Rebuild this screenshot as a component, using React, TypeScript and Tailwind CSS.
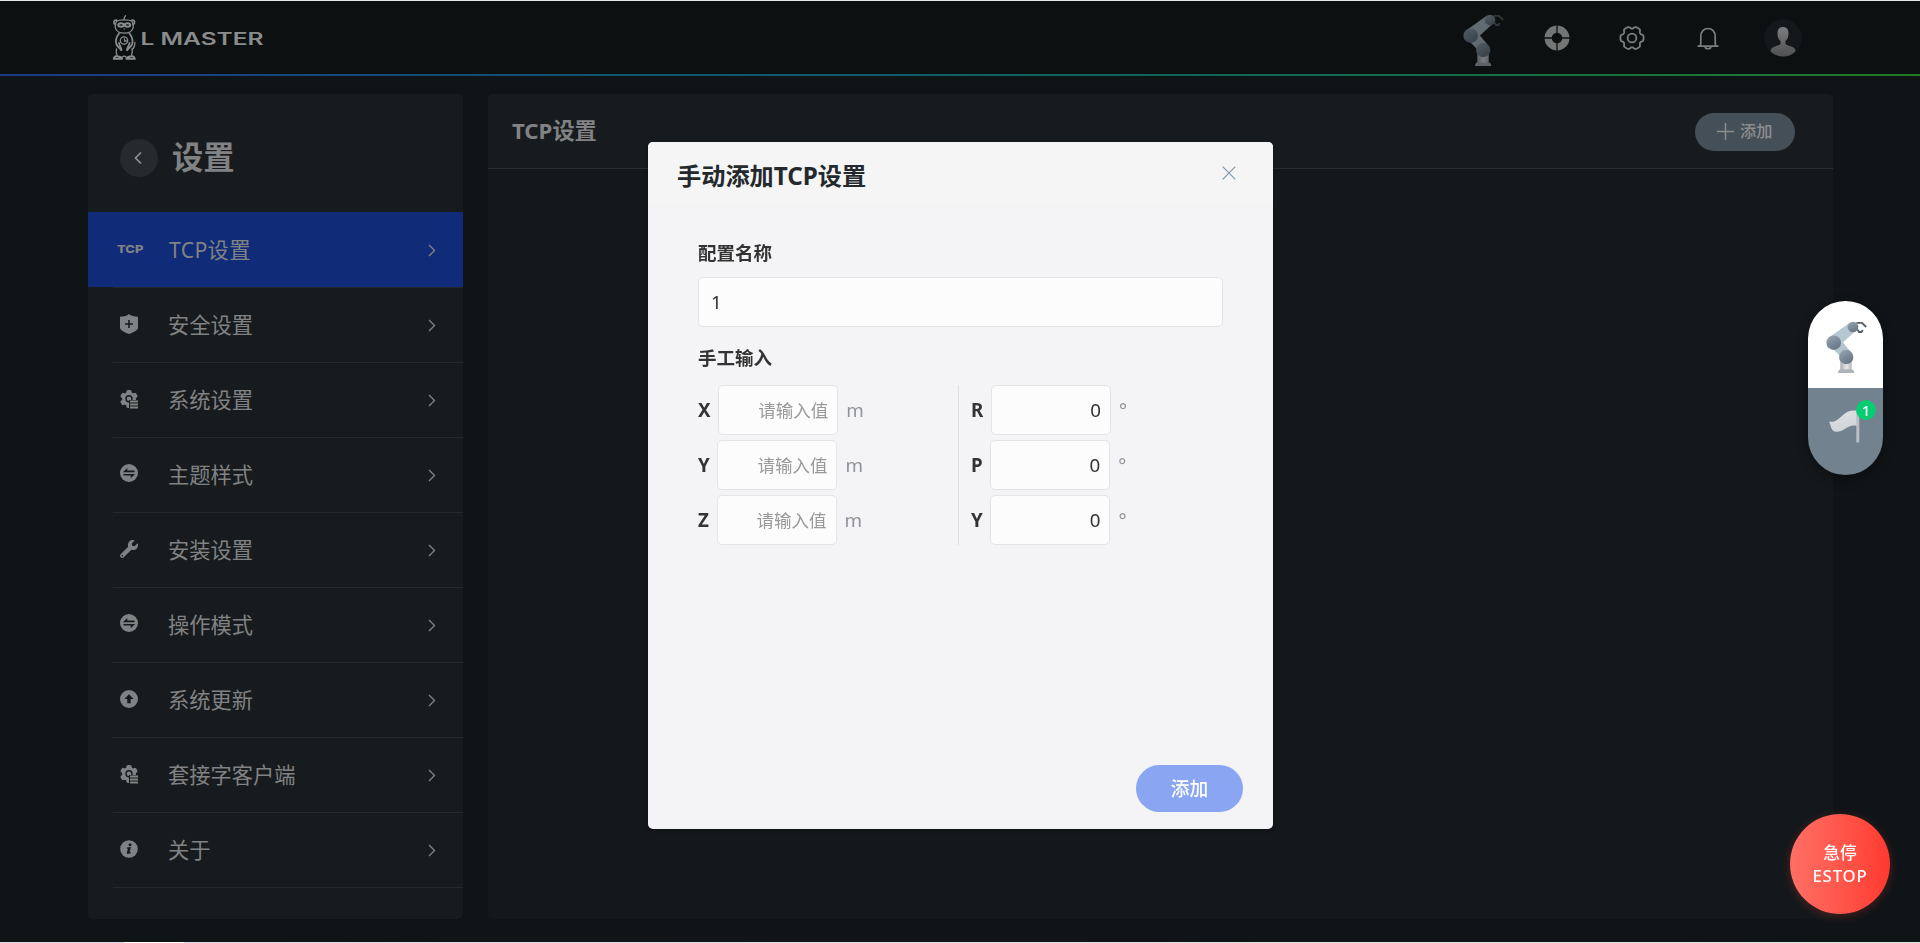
import React from "react";
import { FaWrench } from "react-icons/fa";

/** Closed wavy outline used for the gear icons. */
function gearPath(c: number, base: number, amp: number, phase: number): string {
  const pts: string[] = [];
  for (let i = 0; i < 120; i++) {
    const t = (i / 120) * Math.PI * 2;
    const wave = Math.tanh(2.2 * (Math.cos(6 * (t - phase)) + 0.45));
    const r = base + amp * wave;
    pts.push(`${(c + r * Math.cos(t)).toFixed(2)} ${(c + r * Math.sin(t)).toFixed(2)}`);
  }
  return `M${pts.join("L")}Z`;
}

function RobotArm({ id, className }: { id: string; className?: string }) {
  return (
    <svg width="42" height="52" viewBox="0 0 42 52" className={className}>
      <defs>
        <linearGradient id={`${id}-joint`} x1="0" y1="0" x2="0.6" y2="1">
          <stop offset="0" stopColor="#9ba8b5" />
          <stop offset="1" stopColor="#667686" />
        </linearGradient>
        <linearGradient id={`${id}-base`} x1="0" y1="0" x2="1" y2="0">
          <stop offset="0" stopColor="#a9adb4" />
          <stop offset="0.55" stopColor="#e4e6e9" />
          <stop offset="1" stopColor="#b4b8be" />
        </linearGradient>
      </defs>
      <path d="M14.3 36h11.4v13H14.3z" fill={`url(#${id}-base)`} />
      <path d="M14 48.5h12.2c.8 0 2 1.500 2 3.500H12c0-2 1.200-3.500 2-3.500z" fill="#aeb3ba" />
      <path d="M4.500 15.500 24 1.500l5.500 8.500L12 26z" fill="#b5c7d3" />
      <path d="M14 18l10 12-8 7L6 27z" fill="#b3c5d1" />
      <path
        d="M30.500 1.800h5.500l4.200 4.200M31.500 8.500l1.500 2.500h2.500l1.200-2"
        fill="none"
        stroke="#555c62"
        strokeWidth="1.800"
      />
      <circle cx="27" cy="6" r="5.300" fill={`url(#${id}-joint)`} />
      <circle cx="7.700" cy="21.700" r="7.300" fill={`url(#${id}-joint)`} />
      <circle cx="20.200" cy="36" r="7.200" fill={`url(#${id}-joint)`} />
    </svg>
  );
}

function Logo() {
  return (
    <div className="flex h-[48px] w-[160px]">
      <svg width="160" height="48" viewBox="0 0 160 48">
        <g transform="translate(0 1)" fill="none" stroke="#8b8d8d" strokeWidth="1.300" strokeLinecap="round">
          <path d="M12 4.500c0-2 .7-3 1.500-3.800" />
          <path d="M4.500 6.500C7 4.400 17.500 4.400 20 6.500c2.500 3.800 1.500 8.500-2 10.500-3 1.500-8.300 1.500-11.500 0C3 15 2 10.300 4.500 6.500z" />
          <path d="M3.500 9.500C1 8 1.500 5 4.500 5.200M21 9.500c2.500-1.500 2-4.500-1-4.300" strokeWidth="1.700" />
          <ellipse cx="9" cy="10" rx="2.700" ry="1.700" strokeWidth="2" />
          <ellipse cx="15.500" cy="10" rx="2.700" ry="1.700" strokeWidth="2" />
          <circle cx="12" cy="25.500" r="3.700" />
          <path d="M12.500 24v2h2" />
          <path d="M7 18.500c-3 4-4 7.500-2.500 11 1.300 2.500 3 3.500 4.500 5.500M17.500 18.500c3 4 4 7.500 2.500 11-1.300 2.500-3 3.500-4.500 5.500" strokeWidth="1.800" />
          <path d="M7 28c.3 2.500 2 4 2.500 7M17.500 28c-.3 2.500-2 4-2.500 7" strokeWidth="1.800" />
          <path d="M4.500 34c-.5 2 0 5 .5 6.500M20 34c.5 2 0 5-.5 6.500M10.500 42c1-1.200 2.500-1.200 3.500 0M20.500 34.500c1.700-2 2.500-4 2.500-7" />
          <path d="M1.800 43.800c.2-2.300 2.500-3.300 4.700-2.300 2 .5 3.500 1 3.500 2.300zM14.500 43.800c0-1.300 1.500-1.800 3.500-2.300 2.200-1 4.500 0 4.700 2.300z" strokeWidth="1.900" />
        </g>
        <path d="M11 14.500h2.500l-1.200 1.300z" fill="#8b8d8d" />
        <text
          x="28.500"
          y="30.500"
          fill="#8b8d8d"
          fontFamily="Inter, sans-serif"
          fontWeight="600"
          fontSize="16.800"
          textLength="123"
          lengthAdjust="spacingAndGlyphs"
        >
          L MASTER
        </text>
      </svg>
    </div>
  );
}

function RingIcon() {
  return (
    <svg width="26" height="26" viewBox="0 0 26 26">
      <circle cx="13" cy="13" r="8.900" fill="none" stroke="#747676" strokeWidth="7.200" />
      <path d="M13 0v26M0 13h26" stroke="#0c1011" strokeWidth="1.300" />
    </svg>
  );
}

function SettingsIcon() {
  return (
    <svg width="26" height="26" viewBox="0 0 26 26" fill="none" stroke="#7c7e7e" strokeWidth="1.800">
      <path d={gearPath(13, 10.400, 1.200, 0)} strokeLinejoin="round" />
      <circle cx="13" cy="13" r="4.400" />
    </svg>
  );
}

function BellIcon() {
  return (
    <svg width="24" height="24" viewBox="0 0 24 24" fill="none" stroke="#7c7e7e" strokeWidth="1.700">
      <path d="M1.500 20.200h21M4 20c.6-1 .8-1.500.8-3v-6.500c0-5 3.200-8 7.200-8s7.200 3 7.200 8V17c0 1.500.2 2 .8 3" />
      <path d="M9 20.500c.5 3 5.500 3 6 0" />
    </svg>
  );
}

function Avatar() {
  return (
    <svg width="38" height="38" viewBox="0 0 38 38">
      <defs>
        <linearGradient id="avatar-fill" x1="0" y1="0" x2="0" y2="1">
          <stop offset="0" stopColor="#7c7d7e" />
          <stop offset="1" stopColor="#4e4f50" />
        </linearGradient>
      </defs>
      <circle cx="19" cy="19" r="18.700" fill="#15181b" />
      <path
        d="M19 8c3.600 0 5.500 2.300 5.500 6 0 4-1 6.500-3 8v3c1.500 1.700 6 2 8.500 4 .9.800 1.500 2 1.500 3.200C28.500 35.500 24 37.500 19 37.500S9.500 35.500 6.500 32.200c0-1.200.6-2.400 1.500-3.200 2.500-2 7-2.300 8.500-4v-3c-2-1.500-3-4-3-8 0-3.700 1.900-6 5.500-6z"
        fill="url(#avatar-fill)"
      />
    </svg>
  );
}

const ICON = "#818283";
const PANEL = "#171b1d";

function ShieldIcon() {
  return (
    <svg width="18" height="20" viewBox="0 0 18 20" className="mb-[2px]">
      <path d="M9 0c2 1.900 5 2.700 9 2.700V14c0 2-5 4.500-9 6-4-1.500-9-4-9-6V2.700C4 2.700 7 1.900 9 0z" fill={ICON} />
      <path d="M9 6v8M5 10h8" stroke={PANEL} strokeWidth="1.600" />
    </svg>
  );
}

function GearListIcon() {
  return (
    <svg width="18" height="19" viewBox="0 0 18 19" className="mb-px">
      <path d={gearPath(9, 7.800, 1.200, Math.PI / 6)} fill={ICON} />
      <circle cx="9" cy="8.700" r="3" fill="none" stroke={PANEL} strokeWidth="1.400" />
      <path d="M9 10h10v9H9z" fill={PANEL} />
      <path d="M10 11.500h8M10 14.500h8M10 17.500h8" stroke={ICON} strokeWidth="1.900" />
    </svg>
  );
}

function SwapIcon() {
  return (
    <svg width="18" height="18" viewBox="0 0 18 18" className="mb-[4px]">
      <circle cx="9" cy="9" r="9" fill={ICON} />
      <path d="M2.800 8.300 7.300 4v2.600h7.200v1.700zM15.200 9.900 10.700 14.200v-2.600H3.500V9.900z" fill={PANEL} />
    </svg>
  );
}

function UpIcon() {
  return (
    <svg width="18" height="18" viewBox="0 0 18 18" className="mb-[2px]">
      <circle cx="9" cy="9" r="9" fill={ICON} />
      <path d="M9 4.200 13.600 9H10.700v4.200H7.300V9H4.400z" fill={PANEL} />
    </svg>
  );
}

function InfoIcon() {
  return (
    <svg width="18" height="18" viewBox="0 0 18 18" className="mb-[2px]">
      <circle cx="9" cy="9" r="8.800" fill={ICON} />
      <circle cx="10" cy="4.700" r="1.500" fill={PANEL} />
      <path d="M6.800 7.600 10.900 7 9.600 12.400 11 12 10.600 13.200 7.400 14 6.700 13.300 7.900 8.700 6.700 8.600z" fill={PANEL} />
    </svg>
  );
}

function TcpIcon() {
  return (
    <svg width="28" height="12" viewBox="0 0 28 12" className="mb-[2px] ml-[2px]">
      <text
        x="1"
        y="10"
        fill={ICON}
        fontFamily="Inter, sans-serif"
        fontWeight="800"
        fontSize="11"
        textLength="26.500"
        lengthAdjust="spacingAndGlyphs"
      >
        TCP
      </text>
    </svg>
  );
}

const ITEMS: { label: string; icon: React.ReactNode }[] = [
  { label: "TCP设置", icon: <TcpIcon /> },
  { label: "安全设置", icon: <ShieldIcon /> },
  { label: "系统设置", icon: <GearListIcon /> },
  { label: "主题样式", icon: <SwapIcon /> },
  { label: "安装设置", icon: <FaWrench size={18} color={ICON} className="mb-[2px]" /> },
  { label: "操作模式", icon: <SwapIcon /> },
  { label: "系统更新", icon: <UpIcon /> },
  { label: "套接字客户端", icon: <GearListIcon /> },
  { label: "关于", icon: <InfoIcon /> },
];

function Sidebar() {
  return (
    <aside className="flex h-[825px] w-[375px] flex-col rounded-[5px] bg-[#171b1d]">
      <div className="flex h-[118px] shrink-0 items-center pt-[10px] pl-8">
        <button className="flex size-[38px] items-center justify-center rounded-full bg-[#26292d]">
          <svg width="8" height="14" viewBox="0 0 8 14" className="mr-[3px]" fill="none" stroke="#909192" strokeWidth="1.700">
            <path d="M7 1.500 1.500 7 7 12.500" />
          </svg>
        </button>
        <h1 className="ml-[14px] text-[31.25px] leading-none font-bold text-[#818283]">设置</h1>
      </div>
      {ITEMS.map((item, i) => (
        <div
          key={item.label}
          className={
            i === 0 ? "h-[75px] shrink-0 bg-[#102c78] pl-[25px]" : "h-[75px] shrink-0 pl-[25px]"
          }
        >
          <div
            className={
              i === 0
                ? "flex h-full items-center"
                : "flex h-full items-center border-t border-[#26292b]"
            }
          >
            <span className="flex w-8 items-center justify-center">{item.icon}</span>
            <span
              className={
                i === 0
                  ? "ml-[24px] flex-1 text-[21.25px] leading-none tracking-[0.3px] text-[#818283]"
                  : "mb-px ml-[23px] flex-1 text-[21.25px] leading-none text-[#818283]"
              }
            >
              {item.label}
            </span>
            <svg width="8" height="13" viewBox="0 0 8 13" className="mt-px mr-[27px]" fill="none" stroke="#818283" strokeWidth="1.400">
              <path d="M1 1l5.500 5.500L1 12" />
            </svg>
          </div>
        </div>
      ))}
      <div className="ml-[25px] h-px bg-[#26292b]" />
    </aside>
  );
}

function ValueRow({ label, value, unit }: { label: string; value?: string; unit: string }) {
  return (
    <div className="flex h-[50px] items-center">
      <label className="text-[18.75px] leading-none font-bold tracking-[-0.3px] text-[#333]">{label}</label>
      <input
        className="ml-[8px] h-[50px] w-[120px] rounded-[5px] border border-[#e4e4e6] bg-[#fcfcfc] pr-[9px] pb-[2px] text-right text-[18.75px] text-[#333] placeholder:text-[17.5px] placeholder:text-[#999]"
        defaultValue={value}
        placeholder="请输入值"
      />
      <span className="ml-[8px] text-[18.75px] leading-none text-[#909399]">{unit}</span>
    </div>
  );
}

function Dialog() {
  return (
    <div className="fixed inset-0 flex items-start justify-center pt-[142px] pl-px">
      <div className="flex h-[687px] w-[625px] flex-col rounded-[5px] bg-[#f4f4f6] shadow-[0_1px_4px_rgba(0,0,0,0.3)]">
        <div className="flex h-[63px] shrink-0 items-center justify-between rounded-t-[5px] bg-[#f5f5f5] pt-[5px] pr-[37px] pl-[29px]">
          <h2 className="text-[24.2px] leading-none font-bold text-[#23292c]">手动添加TCP设置</h2>
          <svg width="14" height="14" viewBox="0 0 14 14" className="mb-[6px]" stroke="#7f99aa" strokeWidth="1.200">
            <path d="M.7.700l12.600 12.600M13.300.700.700 13.300" />
          </svg>
        </div>
        <div className="flex flex-1 flex-col px-[50px] pt-[38px]">
          <h3 className="text-[18.5px] leading-[20px] font-bold text-[#333]">配置名称</h3>
          <input
            className="mt-[14px] h-[50px] shrink-0 rounded-[5px] border border-[#e4e4e6] bg-[#fcfcfc] px-[12px] pb-[2px] text-[18.75px] text-[#333]"
            defaultValue="1"
          />
          <h3 className="mt-[21px] text-[18.5px] leading-[20px] font-bold text-[#333]">手工输入</h3>
          <div className="mt-[17px] flex h-[160px]">
            <div className="flex w-[260px] flex-col gap-[5px]">
              <ValueRow label="X" unit="m" />
              <ValueRow label="Y" unit="m" />
              <ValueRow label="Z" unit="m" />
            </div>
            <div className="flex flex-col gap-[5px] border-l border-[#e0e0e2] pl-[12px]">
              <ValueRow label="R" value="0" unit="°" />
              <ValueRow label="P" value="0" unit="°" />
              <ValueRow label="Y" value="0" unit="°" />
            </div>
          </div>
        </div>
        <div className="flex justify-end pr-[30px] pb-[17px]">
          <button className="h-[47px] w-[107px] rounded-full bg-[#8aa6f2] pt-px text-[18.75px] font-medium text-white">添加</button>
        </div>
      </div>
    </div>
  );
}

function FloatingSwitch() {
  return (
    <div className="fixed top-[301px] left-[1808px] flex h-[174px] w-[75px] flex-col overflow-hidden rounded-full shadow-[0_4px_12px_rgba(0,0,0,0.35)]">
      <div className="flex h-[87px] justify-center bg-white pt-[20px] pl-[2px]">
        <RobotArm id="pill" />
      </div>
      <div className="relative flex h-[87px] justify-center bg-[#72828f] pt-[21px]">
        <svg width="32" height="34" viewBox="0 0 32 34" className="ml-[-2px]">
          <defs>
            <linearGradient id="flag-fill" x1="0" y1="0" x2="0.300" y2="1">
              <stop offset="0" stopColor="#dfe1e3" />
              <stop offset="1" stopColor="#d2d5d8" />
            </linearGradient>
          </defs>
          <path
            d="M0 12.500C6 14 10 9.500 14 6 18 2 22 1 28 1.500V17c-5-1.500-9 1-13 3.500-4 2.500-9 3-11 1C2 20 1.500 15 0 12.500z"
            fill="url(#flag-fill)"
          />
          <path d="M27.300 2h3v31.600h-3z" fill="#b9bfc4" />
        </svg>
        <span className="absolute top-[12px] left-[48px] flex size-[20px] items-center justify-center rounded-full bg-[#08cc72] text-[15px] leading-none font-medium text-white">
          1
        </span>
      </div>
    </div>
  );
}

export default function App() {
  return (
    <div className="flex h-[943px] w-[1920px] flex-col overflow-hidden bg-[#101417] font-['Noto_Sans','Noto_Sans_CJK_SC',sans-serif]">
      <div className="h-px shrink-0 bg-[#dfe8e6]" />
      <header className="flex h-[73px] shrink-0 items-center justify-between bg-[#0c1011] pl-[112px]">
        <Logo />
        <div className="flex items-center pr-[118px]">
          <RobotArm id="header" className="mt-[5px] opacity-50" />
          <span className="ml-[39px] flex"><RingIcon /></span>
          <span className="ml-[49px] flex"><SettingsIcon /></span>
          <span className="ml-[51px] flex"><BellIcon /></span>
          <span className="ml-[44px] flex"><Avatar /></span>
        </div>
      </header>
      <div className="h-[2px] shrink-0 bg-linear-to-r from-[#1b3a8a] to-[#1f7a22]" />
      <main className="flex flex-1 gap-[25px] pt-[18px] pl-[88px]">
        <Sidebar />
        <section className="flex h-[825px] w-[1345px] flex-col rounded-[5px] bg-[#14181b]">
          <div className="flex h-[75px] items-center justify-between rounded-t-[5px] border-b border-[#2a2e31] bg-[#171b1e] pr-[38px] pl-[24px]">
            <h2 className="mt-px text-[22.2px] leading-none font-bold text-[#818283]">TCP设置</h2>
            <button className="mt-px flex h-[38px] w-[100px] items-center rounded-full bg-[#444f58] pl-[22px] text-[16.25px] text-[#8c8d8d]">
              <svg width="17" height="17" viewBox="0 0 17 17" stroke="#8c8d8d" strokeWidth="1.500">
                <path d="M8.500 0v17M0 8.500h17" />
              </svg>
              <span className="ml-[6px] font-medium">添加</span>
            </button>
          </div>
        </section>
      </main>
      <div className="flex h-px shrink-0">
        <div className="w-[124px] bg-[#dcdbe9]" />
        <div className="w-[60px] bg-white" />
        <div className="flex-1 bg-linear-to-r from-[#dcdbe9] to-[#d3f0dc]" />
      </div>
      <Dialog />
      <FloatingSwitch />
      <button className="fixed top-[814px] left-[1790px] flex size-[100px] flex-col items-center justify-center rounded-full bg-linear-to-r from-[#ff6e64] to-[#ff382e] text-[16.8px] leading-[23px] font-medium text-white shadow-[0_2px_10px_rgba(255,70,60,0.25)]">
        <span>急停</span>
        <span className="tracking-[0.8px]">ESTOP</span>
      </button>
    </div>
  );
}
